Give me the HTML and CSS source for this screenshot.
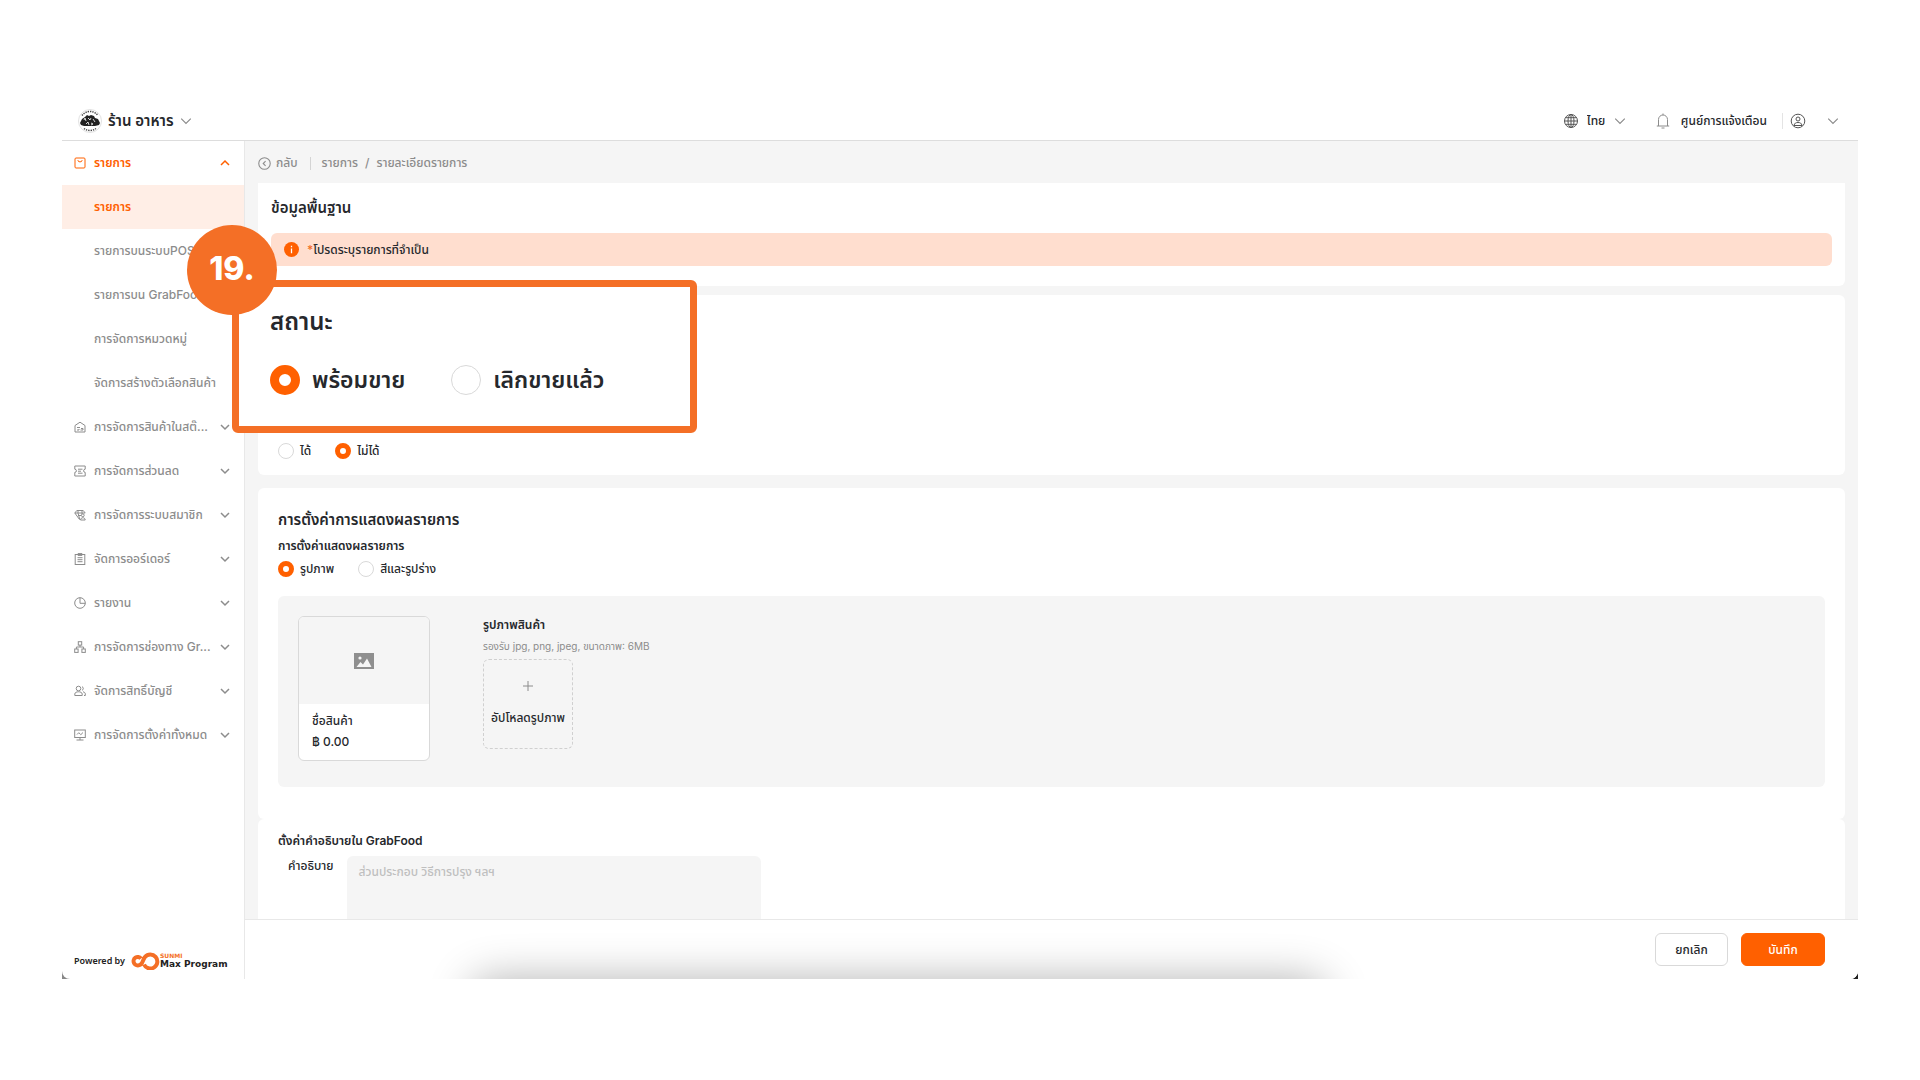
FILE: index.html
```html
<!DOCTYPE html>
<html lang="th">
<head>
  <meta charset="UTF-8" />
  <meta name="viewport" content="width=device-width, initial-scale=1.0"/>
  <title>รายละเอียดรายการ</title>
  <link rel="stylesheet" href="styles.css">
</head>
<body>
  <!-- shared icons -->
  <svg class="sprite" aria-hidden="true">
    <symbol id="chevron" viewBox="0 0 10 10"><path d="M1 3l4 4 4-4"/></symbol>
  </svg>

  <div class="window">
    <div class="app">
      <header class="topbar">
        <button class="store" type="button">
          <svg class="store-logo" viewBox="0 0 24 24">
            <circle cx="12" cy="12" r="11.5" fill="#fff" stroke="#ccc" stroke-width=".6"/>
            <path d="M4 6.500a10 10 0 0 1 16 0M6 19.500a10 10 0 0 0 12 0" fill="none" stroke="#444" stroke-width="1.500" stroke-dasharray="1.300 1"/>
            <path d="M2 14l2-4 3-2 2-2 2 1 2-1 3 1 1 2 3 1 2 4-1 2-4 1H6l-3-1z" fill="#222"/>
            <path d="M6 11l1-2 1 3M10 9l2 2 1-2M15 10l2 3M8 15l2-2 1 3M13 14l2 1-2 1" fill="none" stroke="#fff" stroke-width=".8"/>
          </svg>
          <span>ร้าน อาหาร</span>
          <svg class="chev"><use href="#chevron"/></svg>
        </button>

        <div class="topbar-right">
          <label class="lang">
            <svg class="ico-dark" viewBox="0 0 16 16"><circle cx="8" cy="8" r="6.5"/><ellipse cx="8" cy="8" rx="3" ry="6.5"/><path d="M8 1.5v13M1.5 8h13M2.5 4.7h11M2.5 11.3h11"/></svg>
            <select aria-label="ภาษา"><option>ไทย</option></select>
            <svg class="chev"><use href="#chevron"/></svg>
          </label>
          <button class="notice" type="button">
            <svg class="ico" viewBox="0 0 16 16"><path d="M1.800 13h12.400M3.500 13V6.500a4.500 4.500 0 0 1 9 0V13M8 2V.5M6.500 15h3"/></svg>
            <span>ศูนย์การแจ้งเตือน</span>
          </button>
          <button class="account" type="button" aria-label="บัญชี">
            <svg class="ico-dark" viewBox="0 0 16 16"><circle cx="8" cy="8" r="6.800"/><circle cx="8" cy="6" r="2"/><path d="M4 12.500c.4-2.400 2-3 4-3s3.600.6 4 3z"/></svg>
            <svg class="chev"><use href="#chevron"/></svg>
          </button>
        </div>
      </header>

      <div class="body">
        <aside class="sidebar">
          <nav>
            <button class="menu open" type="button">
              <svg class="ico" viewBox="0 0 12 12"><rect x="1" y="1" width="10" height="10" rx="1"/><path d="M4 3v.4a2 1.500 0 0 0 4 0V3"/></svg>
              <span>รายการ</span>
              <svg class="chev up"><use href="#chevron"/></svg>
            </button>
            <a href="#" class="sub active">รายการ</a>
            <a href="#" class="sub">รายการบนระบบPOS</a>
            <a href="#" class="sub">รายการบน GrabFood</a>
            <a href="#" class="sub">การจัดการหมวดหมู่</a>
            <a href="#" class="sub">จัดการสร้างตัวเลือกสินค้า</a>
            <button class="menu" type="button">
              <svg class="ico" viewBox="0 0 12 12"><path d="M1 4.500L6 1.200l5 3.300V11H1zM3 6.500h3M3 9h2v-1M6.500 9h2.500V7.500H7"/></svg>
              <span>การจัดการสินค้าในสต๊...</span>
              <svg class="chev"><use href="#chevron"/></svg>
            </button>
            <button class="menu" type="button">
              <svg class="ico" viewBox="0 0 12 12"><path d="M.8 1h10.400v3.200a1.500 1.500 0 0 0 0 3.200V11H.8V7.400a1.500 1.500 0 0 0 0-3.200zM4 4.200h4.500M4 6.200h3M4 8.200h4.500"/></svg>
              <span>การจัดการส่วนลด</span>
              <svg class="chev"><use href="#chevron"/></svg>
            </button>
            <button class="menu" type="button">
              <svg class="ico" viewBox="0 0 12 12"><path d="M5.500 10.500L.8 4l2-2.500h6.400l2 2.500M.8 4h10.400M4 1.500V4l1.800 6.500M8 1.500V5M4 6.500h3"/><circle cx="8.800" cy="6.300" r="1.400"/><path d="M6.500 11c0-3 4.700-3 4.700 0z"/></svg>
              <span>การจัดการระบบสมาชิก</span>
              <svg class="chev"><use href="#chevron"/></svg>
            </button>
            <button class="menu" type="button">
              <svg class="ico" viewBox="0 0 12 12"><rect x="1.200" y="1.500" width="9.600" height="10"/><path d="M4 .6h4v1.800H4zM3.500 4.700h5M3.500 6.700h5M3.500 8.700h5"/></svg>
              <span>จัดการออร์เดอร์</span>
              <svg class="chev"><use href="#chevron"/></svg>
            </button>
            <button class="menu" type="button">
              <svg class="ico" viewBox="0 0 12 12"><circle cx="6" cy="6" r="5.300"/><path d="M6 .7V6.300h5.300"/></svg>
              <span>รายงาน</span>
              <svg class="chev"><use href="#chevron"/></svg>
            </button>
            <button class="menu" type="button">
              <svg class="ico" viewBox="0 0 12 12"><rect x="4.300" y=".7" width="3.400" height="3.400"/><rect x=".7" y="8" width="3.400" height="3.400"/><rect x="7.900" y="8" width="3.400" height="3.400"/><path d="M6 4v2M2.400 8V6h7.200v2"/></svg>
              <span>การจัดการช่องทาง Gr...</span>
              <svg class="chev"><use href="#chevron"/></svg>
            </button>
            <button class="menu" type="button">
              <svg class="ico" viewBox="0 0 12 12"><circle cx="4.500" cy="3.500" r="2.300"/><path d="M.8 10.500V9c0-3 7.400-3 7.400 0v1.500zM8 1.700a1.900 1.900 0 0 1 0 3.600M9 6.800c1.500.3 2.300 1 2.300 2.200v1.500H10"/></svg>
              <span>จัดการสิทธิ์บัญชี</span>
              <svg class="chev"><use href="#chevron"/></svg>
            </button>
            <button class="menu" type="button">
              <svg class="ico" viewBox="0 0 12 12"><rect x=".7" y="1" width="10.600" height="7.500"/><path d="M6 8.500v2.500M2.500 11h7M3 5.500l1.800-1.800 2 2L9 3.500"/></svg>
              <span>การจัดการตั้งค่าทั้งหมด</span>
              <svg class="chev"><use href="#chevron"/></svg>
            </button>
          </nav>
          <div class="powered">
            <span>Powered by</span>
            <svg class="powered-logo" viewBox="0 0 29 18"><path d="M10 6.500A4.200 4.200 0 1 0 8.500 13C12 12.500 11.500 7.500 14 5a7 7 0 1 1-1 7.500" fill="none" stroke="#f46f26" stroke-width="4"/></svg>
            <span class="brand"><small>SUNMI</small><b>Max Program</b></span>
          </div>
        </aside>

        <div class="page">
          <main class="content">
            <div class="crumbs">
              <a href="#" class="back">
                <svg class="ico" viewBox="0 0 12 12"><circle cx="6" cy="6" r="5.300"/><path d="M7 3.800L4.800 6 7 8.200"/></svg>
                กลับ
              </a>
              <a href="#">รายการ</a>
              <span>/</span>
              <span>รายละเอียดรายการ</span>
            </div>

            <section class="card basic">
              <h2>ข้อมูลพื้นฐาน</h2>
              <div class="alert">
                <svg viewBox="0 0 14 14"><circle cx="7" cy="7" r="7" fill="#ff6000"/><path d="M7 3.500v1.300M7 6v4.500" stroke="#fff" stroke-width="1.200"/></svg>
                <p><i>*</i>โปรดระบุรายการที่จำเป็น</p>
              </div>
            </section>

            <section class="card status">
              <div class="radios">
                <label><input type="radio" name="sellable"><span>ได้</span></label>
                <label><input type="radio" name="sellable" checked><span>ไม่ได้</span></label>
              </div>
            </section>

            <section class="card display">
              <h2>การตั้งค่าการแสดงผลรายการ</h2>
              <h3>การตั้งค่าแสดงผลรายการ</h3>
              <div class="radios">
                <label><input type="radio" name="display" checked><span>รูปภาพ</span></label>
                <label><input type="radio" name="display"><span>สีและรูปร่าง</span></label>
              </div>
              <div class="preview">
                <div class="product">
                  <div class="product-img">
                    <svg viewBox="0 0 20 16"><path d="M0 0h20v16H0z" fill="#8f8f8f"/><circle cx="6" cy="5" r="1.600" fill="#f5f5f5"/><path d="M2.500 14l4-5 2.500 2.500L13 5.500l4.500 8.500z" fill="#f5f5f5"/></svg>
                  </div>
                  <div class="product-info">
                    <p>ชื่อสินค้า</p>
                    <p>฿ 0.00</p>
                  </div>
                </div>
                <div class="upload">
                  <h3>รูปภาพสินค้า</h3>
                  <p>รองรับ jpg, png, jpeg, ขนาดภาพ: 6MB</p>
                  <button type="button">
                    <svg viewBox="0 0 12 12"><path d="M6 1v10M1 6h10"/></svg>
                    <span>อัปโหลดรูปภาพ</span>
                  </button>
                </div>
              </div>
            </section>

            <section class="card grab">
              <h3>ตั้งค่าคำอธิบายใน GrabFood</h3>
              <div class="field">
                <label for="desc">คำอธิบาย</label>
                <textarea id="desc" placeholder="ส่วนประกอบ วิธีการปรุง ฯลฯ"></textarea>
              </div>
            </section>
          </main>

          <footer class="actions">
            <button class="btn" type="button">ยกเลิก</button>
            <button class="btn primary" type="button">บันทึก</button>
          </footer>
        </div>
      </div>
    </div>

    <!-- enlarged step callout -->
    <section class="callout">
      <div class="step">19.</div>
      <h2>สถานะ</h2>
      <div class="radios big">
        <label><input type="radio" name="status" checked><span>พร้อมขาย</span></label>
        <label><input type="radio" name="status"><span>เลิกขายแล้ว</span></label>
      </div>
    </section>
  </div>
</body>
</html>
```
FILE: styles.css
```css
* {
  box-sizing: border-box;
}

body {
  margin: 0;
  height: 100vh;
  padding: 101px 62px;
  background: #fff;
  color: #26282c;
  font-family: Inter, "Noto Sans Thai", "Noto Sans", sans-serif;
  font-size: 12px;
  font-weight: 500;
  line-height: 20px;
  overflow: hidden;
}

h2, h3, p {
  margin: 0;
}
h2 {
  font-size: 15px;
  font-weight: 600;
  line-height: 24px;
}
h3 {
  font-size: 12px;
  font-weight: 600;
  line-height: 20px;
}
a {
  color: inherit;
  text-decoration: none;
}
button, select, textarea {
  font: inherit;
  color: inherit;
  background: none;
  border: 0;
  padding: 0;
  margin: 0;
}
button {
  cursor: pointer;
}

.sprite {
  position: absolute;
  width: 0;
  height: 0;
}
.ico, .ico-dark, .chev {
  flex: none;
  width: 12px;
  height: 12px;
  fill: none;
  stroke: #8c8c8c;
  stroke-width: 1;
}
.ico-dark {
  width: 16px;
  height: 16px;
  stroke: #555;
}
.chev {
  width: 10px;
  height: 10px;
  stroke-width: 1.5;
}
.topbar .chev {
  width: 12px;
  height: 12px;
  stroke-width: 1;
}
.up {
  transform: rotate(180deg);
}

.window {
  position: relative;
  height: 100%;
  background: linear-gradient(90deg, #888, #222);
}
.app {
  display: flex;
  flex-direction: column;
  height: 100%;
  background: #fff;
  border-radius: 0 0 8px 8px;
  overflow: hidden;
}

/* top bar */
.topbar {
  display: flex;
  flex: none;
  align-items: center;
  justify-content: space-between;
  height: 40px;
  padding: 0 19px 0 16px;
  border-bottom: 1px solid #ddd;
}
.store {
  display: flex;
  align-items: center;
  gap: 6px;
  font-size: 15px;
  font-weight: 600;
}
.store-logo {
  width: 24px;
  height: 24px;
}
.topbar-right, .lang, .notice, .account {
  display: flex;
  align-items: center;
}
.lang {
  gap: 8px;
  margin-right: 29px;
}
.lang select {
  appearance: none;
}
.notice {
  gap: 10px;
  padding-right: 15px;
  border-right: 1px solid #e4e4e4;
  line-height: 14px;
}
.notice .ico {
  width: 16px;
  height: 16px;
}
.account {
  gap: 21px;
  padding-left: 7px;
}

.body {
  display: flex;
  flex: 1;
  min-height: 0;
}

/* sidebar */
.sidebar {
  display: flex;
  flex: none;
  flex-direction: column;
  justify-content: space-between;
  width: 183px;
  border-right: 1px solid #e8e8e8;
  color: #8c8c8c;
}
.menu, .sub {
  display: flex;
  align-items: center;
  width: 100%;
  height: 44px;
  padding: 0 14px 0 12px;
}
.menu span {
  flex: 1;
  margin-left: 8px;
  text-align: left;
  white-space: nowrap;
}
.sub {
  padding-left: 32px;
  padding-right: 0;
  white-space: nowrap;
}
.active {
  background: #ffeee6;
}
.open, .active {
  color: #ff6000;
  font-weight: 600;
}
.open svg {
  stroke: #ff6000;
}
.powered {
  display: flex;
  align-items: center;
  gap: 6px;
  height: 36px;
  padding: 0 0 0 12px;
  color: #222;
  font-family: "Noto Sans", sans-serif;
  font-size: 9px;
  font-weight: 600;
  white-space: nowrap;
}
.powered-logo {
  width: 29px;
  height: 18px;
}
.brand {
  display: flex;
  flex-direction: column;
  margin-left: -6px;
  font-family: "DejaVu Sans", sans-serif;
}
.brand small {
  color: #f46f26;
  font-size: 6px;
  line-height: 6px;
}
.brand b {
  font-size: 9px;
  line-height: 10px;
}

/* content */
.page {
  display: flex;
  flex: 1;
  flex-direction: column;
  min-width: 0;
  background: #f5f5f5;
}
.content {
  flex: 1;
  min-height: 0;
  padding: 0 13px;
  overflow: hidden;
}
.crumbs {
  display: flex;
  align-items: center;
  gap: 7px;
  height: 42px;
  padding-top: 2px;
  color: #8c8c8c;
}
.back {
  display: flex;
  align-items: center;
  gap: 5px;
  margin-right: 4px;
  padding-right: 12px;
  border-right: 1px solid #d4d4d4;
  line-height: 12px;
}
.back .ico {
  width: 13px;
  height: 13px;
}
.card {
  padding: 20px;
  background: #fff;
  border-radius: 6px;
}
.basic {
  padding: 13px 13px 20px;
  border-radius: 0 0 6px 6px;
}
.alert {
  display: flex;
  align-items: center;
  gap: 8px;
  height: 33px;
  margin-top: 13px;
  padding: 0 13px;
  background: #ffdecf;
  border-radius: 6px;
}
.alert svg {
  width: 15px;
  height: 15px;
}
.alert i {
  color: #f26f27;
  font-style: normal;
}
.status {
  display: flex;
  align-items: flex-end;
  height: 180px;
  margin: 9px 0 13px;
  padding-bottom: 14px;
}
.radios {
  display: flex;
  gap: 24px;
}
.radios label {
  display: flex;
  align-items: center;
  gap: 6px;
}
.radios input {
  appearance: none;
  width: 16px;
  height: 16px;
  margin: 0;
  background: #fff;
  border: 1px solid #d9d9d9;
  border-radius: 50%;
}
.radios input:checked {
  border: 5px solid #ff6000;
}
.display {
  height: 331px;
}
.display h3 {
  margin: 4px 0 3px;
}
.preview {
  display: flex;
  align-items: flex-start;
  gap: 53px;
  height: 191px;
  margin-top: 17px;
  padding: 20px;
  background: #f5f5f5;
  border-radius: 6px;
}
.product {
  width: 132px;
  border: 1px solid #d9d9d9;
  border-radius: 6px;
  background: #fff;
  overflow: hidden;
}
.product-img {
  display: flex;
  align-items: center;
  justify-content: center;
  height: 87px;
  background: #f5f5f5;
}
.product-img svg {
  width: 20px;
  height: 16px;
}
.product-info {
  padding: 6px 13px 8px;
  line-height: 21px;
}
.upload p {
  margin: 2px 0 3px;
  color: #8c8c8c;
  font-size: 10px;
  font-weight: 400;
}
.upload h3 {
  margin: 0;
  line-height: 18px;
}
.upload button {
  display: flex;
  flex-direction: column;
  align-items: center;
  justify-content: center;
  gap: 16px;
  width: 90px;
  height: 90px;
  border: 1px dashed #d0d0d0;
  border-radius: 6px;
}
.upload svg {
  width: 12px;
  height: 12px;
  stroke: #8c8c8c;
}
.grab {
  padding-top: 12px;
}
.field {
  display: flex;
  gap: 13px;
  margin-top: 5px;
  padding-left: 10px;
}
.field textarea {
  width: 414px;
  height: 110px;
  padding: 6px 12px;
  background: #f5f5f5;
  border-radius: 6px;
  resize: none;
}
.field textarea::placeholder {
  color: #bfbfbf;
}

/* footer buttons */
.actions {
  position: relative;
  display: flex;
  flex: none;
  align-items: flex-start;
  justify-content: flex-end;
  gap: 13px;
  height: 60px;
  padding: 13px 33px 0;
  background: #fff;
  border-top: 1px solid #e8e8e8;
}
.actions::after {
  content: "";
  position: absolute;
  top: 100%;
  left: 14%;
  right: 33%;
  height: 60px;
  border-radius: 20px;
  box-shadow: 0 0 44px rgba(0,0,0,0.3);
}
.btn {
  width: 73px;
  height: 33px;
  border: 1px solid #d9d9d9;
  border-radius: 6px;
}
.primary {
  width: 84px;
  background: #ff6000;
  border-color: #ff6000;
  color: #fff;
}

/* callout */
.callout {
  position: absolute;
  top: 179px;
  left: 170px;
  width: 465px;
  height: 153px;
  padding: 21px 31px;
  background: #fff;
  border: 7px solid #f46f26;
  border-radius: 6px;
}
.callout h2 {
  font-size: 24px;
  line-height: 28px;
}
.step {
  position: absolute;
  top: -62px;
  left: -52px;
  width: 90px;
  height: 90px;
  background: #f46f26;
  border-radius: 50%;
  color: #fff;
  font-size: 32px;
  font-weight: 800;
  line-height: 88px;
  text-align: center;
}
.big {
  gap: 46px;
  margin-top: 28px;
  font-size: 23px;
  font-weight: 600;
  line-height: 32px;
}
.big label {
  gap: 12px;
}
.big input {
  width: 30px;
  height: 30px;
}
.big input:checked {
  border-width: 9px;
}
```
